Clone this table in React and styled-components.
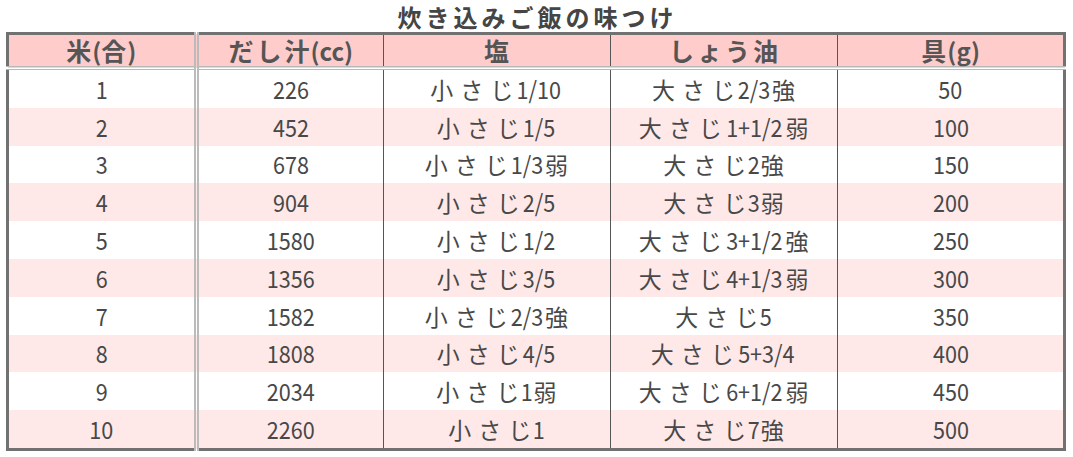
import React from "react";
import styled, { createGlobalStyle } from "styled-components";

const rows = [
  ["1", "226", "小さじ1/10", "大さじ2/3強", "50"],
  ["2", "452", "小さじ1/5", "大さじ1+1/2弱", "100"],
  ["3", "678", "小さじ1/3弱", "大さじ2強", "150"],
  ["4", "904", "小さじ2/5", "大さじ3弱", "200"],
  ["5", "1580", "小さじ1/2", "大さじ3+1/2強", "250"],
  ["6", "1356", "小さじ3/5", "大さじ4+1/3弱", "300"],
  ["7", "1582", "小さじ2/3強", "大さじ5", "350"],
  ["8", "1808", "小さじ4/5", "大さじ5+3/4", "400"],
  ["9", "2034", "小さじ1弱", "大さじ6+1/2弱", "450"],
  ["10", "2260", "小さじ1", "大さじ7強", "500"],
];

const headers = ["米(合)", "だし汁(cc)", "塩", "しょう油", "具(g)"];
const widths = [188, 187, 226, 227, 226];

const GlobalStyle = createGlobalStyle`
  body {
    margin: 0;
    background: #fff;
    font-family: "Noto Sans CJK JP", "Noto Sans", sans-serif;
    color: #4d4d4d;
  }
`;

const Page = styled.div`
  padding: 0 6px;
  width: 1060px;
`;

const Title = styled.div`
  height: 32px;
  line-height: 34px;
  text-align: center;
  font-size: 24px;
  font-weight: bold;
  color: #454545;
`;

const Table = styled.table`
  width: 1060px;
  border-collapse: collapse;
  border: 3px solid #717171;
  table-layout: fixed;
`;

const divider = (col) =>
  col === 1 ? "5px double #bbb" : col > 1 ? "1px solid #555" : "none";

const HeadCell = styled.th`
  height: 31px;
  padding: 0;
  background: #ffcccc;
  font-size: 24px;
  line-height: 28px;
  font-weight: bold;
  color: #555;
  text-align: center;
  border-bottom: 4px double #b8b8b8;
  border-left: ${(p) => divider(p.$col)};
`;

const Row = styled.tr`
  background: ${(p) => (p.$even ? "#ffe8e8" : "#fff")};
`;

const Cell = styled.td`
  height: 37.8px;
  padding: 0;
  font-size: 24px;
  line-height: 28px;
  text-align: center;
  color: #484848;
  border-left: ${(p) => divider(p.$col)};
`;

const Jp = styled.span`
  font-size: ${(p) => p.$size}px;
  letter-spacing: ${(p) => p.$gap}px;
`;

// last glyph of a run carries no trailing space
const Tail = styled.span`
  letter-spacing: 1px;
`;

// the shot's digits are tall and narrow
const Latin = styled.span`
  display: inline-block;
  transform: ${(p) => (p.$narrow ? "scaleX(0.9)" : "none")};
`;

// CJK glyphs in the shot sit wider apart than the latin ones
const Spaced = ({ text, gap = 3, size = 23, narrow = true }) =>
  text
    .split(/([^\x00-\x7f]+)/)
    .filter(Boolean)
    .map((part, i) =>
      /[^\x00-\x7f]/.test(part) ? (
        <Jp key={i} $gap={gap} $size={size}>
          {part.slice(0, -1)}
          <Tail>{part.slice(-1)}</Tail>
        </Jp>
      ) : (
        <Latin key={i} $narrow={narrow}>
          {part}
        </Latin>
      )
    );

export default function App() {
  return (
    <Page>
      <GlobalStyle />
      <Title>
        <Spaced text="炊き込みご飯の味つけ" gap={4} size={24} narrow={false} />
      </Title>
      <Table>
        <colgroup>
          {widths.map((w, i) => (
            <col key={i} style={{ width: w }} />
          ))}
        </colgroup>
        <thead>
          <tr>
            {headers.map((h, i) => (
              <HeadCell key={h} $col={i}>
                <Spaced text={h} gap={3} size={25} narrow={false} />
              </HeadCell>
            ))}
          </tr>
        </thead>
        <tbody>
          {rows.map((r, ri) => (
            <Row key={ri} $even={ri % 2 === 1}>
              {r.map((c, ci) => (
                <Cell key={ci} $col={ci}>
                  <Spaced text={c} gap={7} size={23} />
                </Cell>
              ))}
            </Row>
          ))}
        </tbody>
      </Table>
    </Page>
  );
}
